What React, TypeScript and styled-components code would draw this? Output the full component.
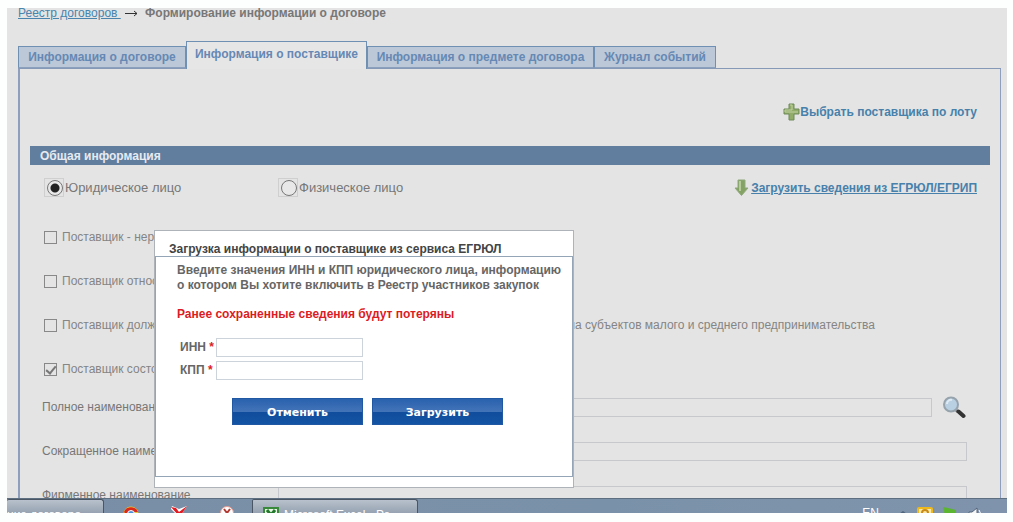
import React from "react";
import styled, { createGlobalStyle } from "styled-components";

const Global = createGlobalStyle`
  * { box-sizing: border-box; }
  body { margin: 0; background: #fdfefe; font-family: "Liberation Sans", Arial, sans-serif; }
`;

const Desktop = styled.div`
  height: 100vh;
  padding: 8px 6px 9px 7px;
`;
const Screen = styled.div`
  position: relative;
  display: flex;
  flex-direction: column;
  height: 100%;
  overflow: hidden;
  background: #e4e4e4;
`;
const Page = styled.main`
  flex: 1;
  min-height: 0;
  overflow: hidden;
  display: flex;
  flex-direction: column;
  padding: 0 6px 0 11px;
`;
const Breadcrumb = styled.nav`
  display: flex;
  align-items: center;
  gap: 4px;
  flex: none;
  height: 10px;
  font-size: 12px;
  line-height: 10px;
  white-space: pre;
  a { color: #4884ae; }
  strong { color: #777; }
`;
const TabBar = styled.div`
  display: flex;
  align-items: flex-end;
  flex: none;
  margin-top: 23px;
  height: 28px;
  border-bottom: 1px solid #869ab8;
`;
const Tab = styled.button<{ $active?: boolean; $w: number }>`
  flex: 0 0 ${(p) => p.$w}px;
  height: ${(p) => (p.$active ? 28 : 22)}px;
  margin-bottom: ${(p) => (p.$active ? -1 : 0)}px;
  padding: 0 0 ${(p) => (p.$active ? 4 : 0)}px;
  border: 1px solid #6f8fb3;
  border-bottom: ${(p) => (p.$active ? "0" : "1px solid #8ba0bd")};
  background: ${(p) => (p.$active ? "#e6e6e7" : "#bcc8d8")};
  color: #6688b4;
  font: bold 12px "Liberation Sans", Arial, sans-serif;
  white-space: nowrap;
`;
const Panel = styled.section`
  flex: 1;
  padding: 0 10px;
  border: solid #8e9fbd;
  border-width: 0 1px 0 2px;
`;
const Actions = styled.div`
  display: flex;
  justify-content: flex-end;
  align-items: center;
  height: 77px;
  padding: 9px 13px 0 0;
`;
const ActionLink = styled.a<{ $line?: boolean }>`
  display: flex;
  align-items: center;
  color: #4781ab;
  font-size: 12px;
  font-weight: bold;
  text-decoration: ${(p) => (p.$line ? "underline" : "none")};
`;
const SectionTitle = styled.h2`
  margin: 0;
  padding-left: 10px;
  height: 19px;
  background: #617e9f;
  color: #e6ebf1;
  font-size: 12px;
  line-height: 20px;
`;
const KindRow = styled.div`
  display: flex;
  align-items: center;
  height: 50px;
  padding: 0 13px 5px 14px;
`;
const Kind = styled.label`
  display: flex;
  align-items: center;
  flex: 0 0 234px;
  gap: 1px;
  color: #777;
  font-size: 13px;
`;
const RadioBox = styled.span`
  display: flex;
  align-items: center;
  justify-content: flex-end;
  width: 20px;
  height: 19px;
  border: 1px solid #cfcfcf;
`;
const Radio = styled.input`
  appearance: none;
  flex: none;
  width: 16px;
  height: 16px;
  margin: 0;
  border: 1px solid #777;
  border-radius: 50%;
  background: #e8e8e8;
  &:checked { background: radial-gradient(circle, #222 0 4px, #e8e8e8 5px); }
`;
const Push = styled.div`
  margin-left: auto;
`;
const CheckRow = styled.label`
  display: flex;
  align-items: center;
  height: 44px;
  padding: 0 115px 0 14px;
  gap: 5px;
  color: #858585;
  font-size: 12px;
  white-space: nowrap;
`;
const Check = styled.input`
  appearance: none;
  display: grid;
  place-items: center;
  flex: none;
  width: 13px;
  height: 13px;
  margin: 0;
  border: 1px solid #888;
  &:checked::after {
    content: "";
    width: 4px;
    height: 8px;
    margin-bottom: 2px;
    border: solid #777;
    border-width: 0 2px 2px 0;
    transform: rotate(40deg);
  }
`;
const Fields = styled.div`
  margin-top: -6px;
`;
const FieldRow = styled.div`
  display: flex;
  align-items: center;
  height: 44px;
  padding: 0 23px 0 12px;
  color: #777;
  font-size: 12px;
  label { flex: 0 0 236px; }
`;
const FieldInput = styled.input`
  flex: 1;
  min-width: 0;
  height: 19px;
  border: 1px solid #c6c8cb;
  background: transparent;
`;
const IconButton = styled.button`
  flex: none;
  width: 35px;
  height: 28px;
  padding: 0 0 0 10px;
  border: 0;
  background: none;
  svg { display: block; }
`;

const Dialog = styled.div`
  position: absolute;
  left: 147px;
  top: 222px;
  width: 420px;
  padding: 12px 0 10px;
  border: 1px solid #aeb3ba;
  background: #fff;
`;
const DialogTitle = styled.h3`
  margin: 0;
  padding-left: 14px;
  color: #444;
  font-size: 12px;
  line-height: 13px;
`;
const DialogBody = styled.form`
  height: 221px;
  padding: 6px 21px;
  border: 1px solid #95a5b8;
  color: #666;
  font-size: 12px;
  font-weight: bold;
  line-height: 15px;
  white-space: nowrap;
  p { margin: 0 0 14px; }
`;
const Warning = styled.p`
  color: #dc1c24;
`;
const CodeRow = styled.div`
  display: flex;
  align-items: center;
  height: 23px;
  padding-left: 3px;
  label { flex: 0 0 36px; }
  i { color: #dc1c24; font-style: normal; }
`;
const CodeInput = styled.input`
  width: 147px;
  height: 19px;
  border: 1px solid #ccd3da;
`;
const Buttons = styled.div`
  display: flex;
  gap: 9px;
  padding: 16px 0 0 55px;
`;
const BlueButton = styled.button`
  width: 131px;
  height: 27px;
  padding: 2px 0 0;
  border: 1px solid #2058a4;
  background: linear-gradient(#2a62ae 0, #4374b8 52%, #104d9c 53%, #1454a4 100%);
  color: #fff;
  font: bold 11px "DejaVu Sans", Verdana, sans-serif;
`;

const Taskbar = styled.footer`
  flex: none;
  display: flex;
  align-items: flex-start;
  height: 15px;
  overflow: hidden;
  border-top: 1px solid #5e6f82;
  background: linear-gradient(90deg, #798ea6, #7a92a9 60%, #7f94ac);
  color: #fff;
`;
const TaskButton = styled.button<{ $w: number }>`
  display: flex;
  align-items: center;
  gap: 5px;
  flex: 0 0 ${(p) => p.$w}px;
  height: 30px;
  padding: 0 0 0 10px;
  border: 1px solid #4b5665;
  border-width: 1px 1px 0;
  border-radius: 2px 3px 0 0;
  background: linear-gradient(#b8c1cc, #929fae 50%);
  color: #fff;
  font: 12px "Liberation Sans", Arial, sans-serif;
  white-space: nowrap;
  &:first-child { padding: 0; border-left: 0; }
`;
const Launchers = styled.div`
  display: flex;
  flex: 0 0 148px;
  justify-content: space-between;
  padding: 7px 18px 0 19px;
`;
const Tray = styled.div`
  display: flex;
  gap: 8px;
  margin-left: auto;
  padding: 8px 22px 0 0;
  font-size: 12px;
  line-height: 12px;
  svg { flex: none; }
`;

const Plus = () => (
  <svg width="17" height="18" viewBox="0 0 17 18">
    <path d="M6 1h5v5h5v5h-5v6H6v-6H1V6h5z" fill="#91ac68" stroke="#6f8b59" />
    <path d="M7 2h2v5H2v2h13" fill="none" stroke="#c0d0a0" />
  </svg>
);
const Down = () => (
  <svg width="17" height="18" viewBox="0 0 17 18">
    <path d="M4 1h7v8h3l-6.500 7.500L1 9h3z" fill="#83a263" stroke="#91a97d" />
    <path d="M6 2v10" stroke="#b7ca9b" strokeWidth="2" />
  </svg>
);
const Magnifier = () => (
  <svg width="24" height="23" viewBox="0 0 24 23">
    <path d="M14 14l2 2" stroke="#777" strokeWidth="3" />
    <path d="M16.500 15.500l5 4.500" stroke="#333" strokeWidth="4" strokeLinecap="round" />
    <circle cx="9" cy="8.500" r="7" fill="#b9cfe2" stroke="#96a3ad" strokeWidth="2" />
    <path d="M5 8a4 4 0 0 1 5-4" fill="none" stroke="#dfeaf3" strokeWidth="2" />
  </svg>
);

const kinds = ["Юридическое лицо", "Физическое лицо"];
const checks: [string, string, boolean][] = [
  ["Поставщик - нерезидент", "", false],
  ["Поставщик относится", "", false],
  ["Поставщик должен", "числа субъектов малого и среднего предпринимательства", false],
  ["Поставщик состоит", "", true],
];

export default function App() {
  return (
    <Desktop>
      <Global />
      <Screen>
        <Page>
          <Breadcrumb>
            <a href="#registry">Реестр договоров </a>
            <svg width="13" height="8" viewBox="0 0 13 8">
              <path d="M0 4.500h12M9 2l3 2.500L9 7" fill="none" stroke="#333" />
            </svg>
            <strong> Формирование информации о договоре</strong>
          </Breadcrumb>
          <TabBar>
            <Tab $w={168}>Информация о договоре</Tab>
            <Tab $w={181} $active>Информация о поставщике</Tab>
            <Tab $w={227}>Информация о предмете договора</Tab>
            <Tab $w={122}>Журнал событий</Tab>
          </TabBar>
          <Panel>
            <Actions>
              <ActionLink href="#lot"><Plus />Выбрать поставщика по лоту</ActionLink>
            </Actions>
            <SectionTitle>Общая информация</SectionTitle>
            <KindRow>
              {kinds.map((k, i) => (
                <Kind key={k}>
                  <RadioBox><Radio type="radio" name="kind" defaultChecked={i === 0} /></RadioBox>
                  {k}
                </Kind>
              ))}
              <Push>
                <ActionLink href="#load" $line><Down />Загрузить сведения из ЕГРЮЛ/ЕГРИП</ActionLink>
              </Push>
            </KindRow>
            {checks.map(([start, end, on]) => (
              <CheckRow key={start}>
                <Check type="checkbox" defaultChecked={on} />
                <span>{start}</span>
                {end && <Push>{end}</Push>}
              </CheckRow>
            ))}
            <Fields>
              <FieldRow>
                <label htmlFor="full">Полное наименование</label>
                <FieldInput id="full" />
                <IconButton aria-label="Поиск"><Magnifier /></IconButton>
              </FieldRow>
              <FieldRow>
                <label htmlFor="short">Сокращенное наименование</label>
                <FieldInput id="short" />
              </FieldRow>
              <FieldRow>
                <label htmlFor="firm">Фирменное наименование</label>
                <FieldInput id="firm" />
              </FieldRow>
            </Fields>
          </Panel>
        </Page>
        <Taskbar>
          <TaskButton $w={97}>ние договора</TaskButton>
          <Launchers>
            <svg width="16" height="16" viewBox="0 0 16 16">
              <circle cx="8" cy="8" r="7.500" fill="#f2c829" />
              <path d="M1 6a7.500 7.500 0 0 1 14 0H8L4 9z" fill="#d9291c" />
              <circle cx="8" cy="8" r="3.500" fill="#4a8fd8" stroke="#fff" />
            </svg>
            <svg width="17" height="16" viewBox="0 0 17 16">
              <path d="M1 0l7 3 8-3-6 9-1 7H6V9L0 3z" fill="#fff" />
              <path d="M0 1l5 1 3 4 8-6-6 9-1 7H7V9z" fill="#e01b22" />
            </svg>
            <svg width="14" height="16" viewBox="0 0 14 16">
              <circle cx="7" cy="7" r="6.500" fill="#fff" stroke="#e79a91" />
              <path d="M4 3l3 4 3-4M7 7v5" fill="none" stroke="#b33a30" strokeWidth="2" />
            </svg>
          </Launchers>
          <TaskButton $w={166}>
            <svg width="16" height="16" viewBox="0 0 16 16">
              <path d="M1 1h14v14H1z" fill="#e9f5e5" stroke="#388a3a" strokeWidth="2" />
              <path d="M4 3l8 10M12 3L4 13" stroke="#217a2b" strokeWidth="3" />
            </svg>
            Microsoft Excel - Ре...
          </TaskButton>
          <Tray>
            <span>EN</span>
            <svg width="22" height="12" viewBox="0 0 22 12"><path d="M12 7l4-3 4 3z" fill="#50647b" /></svg>
            <svg width="16" height="15" viewBox="0 0 16 15">
              <rect x="1" y="1" width="14" height="13" rx="1" fill="#fbe9a5" stroke="#efb91b" strokeWidth="2" />
              <path d="M5 6a3 3 0 0 1 6 0L8 9" fill="none" stroke="#c88a18" strokeWidth="2" />
            </svg>
            <svg width="18" height="15" viewBox="0 0 18 15"><path d="M2 0l5 1 8 2v10H5z" fill="#5cb531" /></svg>
            <svg width="18" height="15" viewBox="0 0 18 15">
              <path d="M2 5h3l5-4v13l-5-4H2z" fill="#f5f5f5" stroke="#53657a" />
              <path d="M12 3q3 3 0 7" fill="none" stroke="#fff" />
            </svg>
          </Tray>
        </Taskbar>
        <Dialog role="dialog" aria-labelledby="dlg">
          <DialogTitle id="dlg">Загрузка информации о поставщике из сервиса ЕГРЮЛ</DialogTitle>
          <DialogBody onSubmit={(e) => e.preventDefault()}>
            <p>Введите значения ИНН и КПП юридического лица, информацию<br />о котором Вы хотите включить в Реестр участников закупок</p>
            <Warning>Ранее сохраненные сведения будут потеряны</Warning>
            <CodeRow><label htmlFor="inn">ИНН <i>*</i></label><CodeInput id="inn" /></CodeRow>
            <CodeRow><label htmlFor="kpp">КПП <i>*</i></label><CodeInput id="kpp" /></CodeRow>
            <Buttons>
              <BlueButton type="button">Отменить</BlueButton>
              <BlueButton type="submit">Загрузить</BlueButton>
            </Buttons>
          </DialogBody>
        </Dialog>
      </Screen>
    </Desktop>
  );
}
